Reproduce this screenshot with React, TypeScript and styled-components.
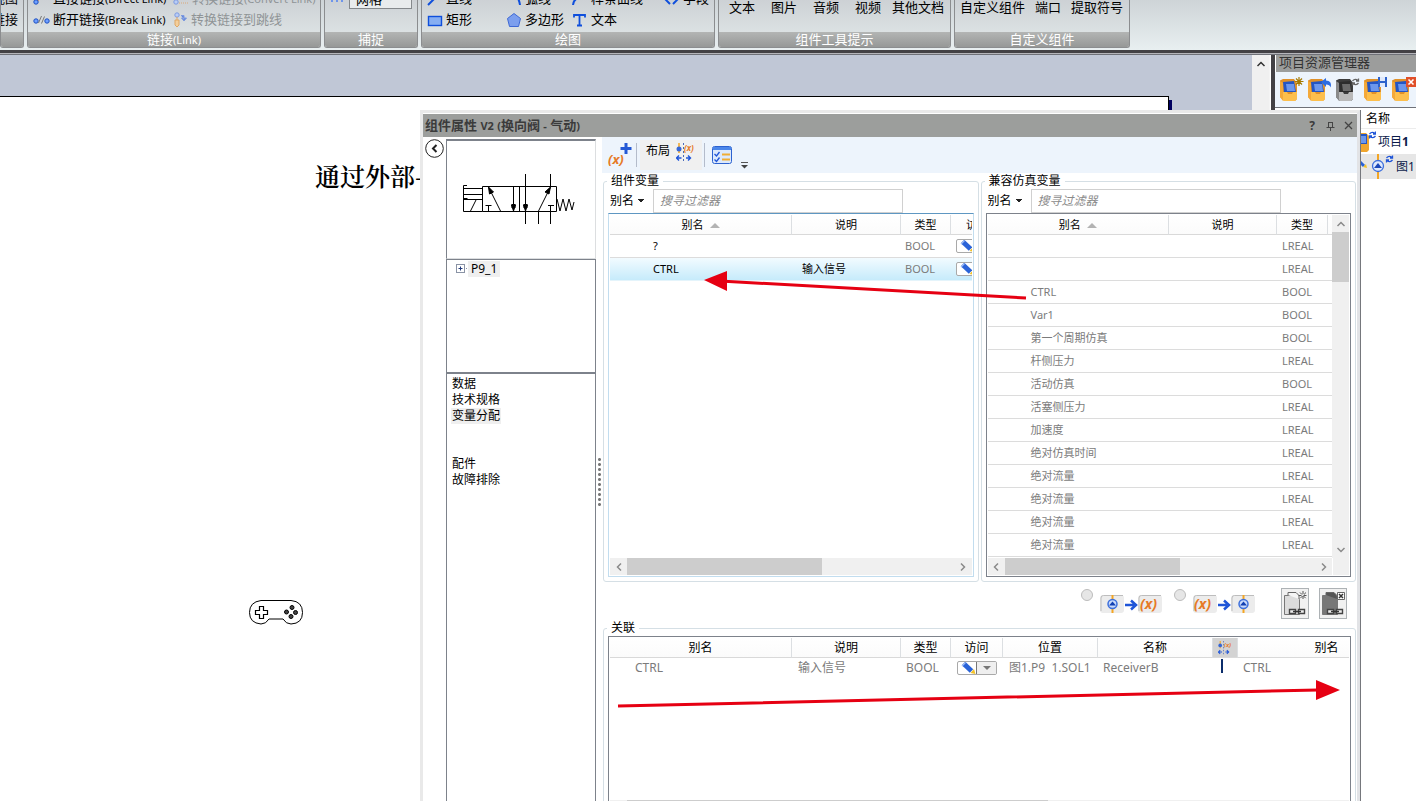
import React from "react";
import styled, { createGlobalStyle, css } from "styled-components";

const Global = createGlobalStyle`
  *, *::before, *::after { box-sizing: border-box; }
  html, body, #root { height: 100%; }
  body {
    margin: 0;
    overflow: hidden;
    background: #fff;
    color: #000;
    font: 12px/16px "Noto Sans", "Noto Sans CJK SC", sans-serif;
  }
  button, input, select {
    margin: 0; padding: 0; border: 0; background: none; color: inherit;
    font: inherit; border-radius: 0;
  }
  svg { display: block; flex: none; }
`;

const Page = styled.div`
  position: relative;
  display: flex;
  flex-direction: column;
  height: 100vh;
  overflow: hidden;
`;

/* ---------- ribbon ---------- */

const Ribbon = styled.header`
  flex: none;
  display: flex;
  gap: 3px;
  height: 50px;
  padding-bottom: 2px;
  background: linear-gradient(#ced4d7, #e8eff0);
  overflow: hidden;
`;

const Group = styled.section<{ $w: number }>`
  flex: none;
  width: ${(p) => p.$w}px;
  display: flex;
  flex-direction: column;
  border: solid #8b8d8f;
  border-width: 0 1px 1px 1px;
  border-radius: 0 0 3px 3px;
  background: linear-gradient(#cdd1d5, #e2e9e9);
  overflow: hidden;
`;

const GroupBody = styled.div<{ $raise?: number; $end?: boolean }>`
  flex: none;
  height: 32px;
  display: flex;
  flex-direction: column;
  justify-content: flex-end;
  align-items: ${(p) => (p.$end ? "flex-end" : "stretch")};
  padding: 0 5px ${(p) => p.$raise ?? 2}px;
`;

const GroupCaption = styled.h2`
  flex: 1;
  margin: 0;
  background: linear-gradient(#b3b5b4, #969897);
  color: #fff;
  font-size: 13px;
  font-weight: 400;
  line-height: 15px;
  text-align: center;
  white-space: nowrap;
`;

const Small = styled.span`
  font-size: 11px;
`;

const ToolRow = styled.div<{ $cols?: string; $gap?: number }>`
  flex: none;
  height: 21px;
  display: ${(p) => (p.$cols ? "grid" : "flex")};
  grid-template-columns: ${(p) => p.$cols};
  gap: ${(p) => p.$gap ?? 0}px;
  align-items: center;
`;

const Tool = styled.button<{ $off?: boolean }>`
  display: flex;
  align-items: center;
  gap: 3px;
  color: ${(p) => (p.$off ? "#8f9496" : "#000")};
  font-size: 13px;
  line-height: 21px;
  white-space: nowrap;
`;

const WideTool = styled(Tool)`
  min-width: 36px;
  justify-content: center;
`;

const GridSelect = styled.select`
  appearance: none;
  width: 65px;
  height: 20px;
  margin-bottom: 2px;
  padding: 0 6px;
  border: 1px solid #85898c;
  background: #e9eced;
  font-size: 13px;
`;

/* ---------- work area ---------- */

const Divider = styled.div`
  flex: none;
  height: 5px;
  border-top: 3px solid #434145;
  border-bottom: 1px solid #6f7178;
  background: #b5b5ba;
`;

const Work = styled.div`
  flex: 1;
  min-height: 0;
  display: flex;
`;

const Canvas = styled.main`
  flex: 1;
  min-width: 0;
  padding: 41px 83px 0 0;
  background: #c0c7d6;
`;

const Sheet = styled.div`
  height: 100%;
  padding: 61px 0 0 315px;
  border: solid #000;
  border-width: 1px 1px 0 0;
  background: #fff;
  box-shadow: 3px 4px 0 #00005f;
`;

const SheetTitle = styled.h1`
  margin: 0;
  font: 600 25px/34px "Noto Serif CJK SC", "Liberation Serif", "Noto Sans CJK SC", serif;
  white-space: nowrap;
`;

const Gamepad = styled.div`
  width: 54px;
  margin: 408px 0 0 -66px;
`;

const PageScroll = styled.div`
  flex: none;
  width: 17px;
  display: flex;
  flex-direction: column;
  align-items: center;
  padding-top: 4px;
  background: #f0f0f0;
`;

const Side = styled.aside`
  flex: none;
  width: 147px;
  display: flex;
  flex-direction: column;
  border-left: 1px solid #f4f4f4;
`;

const SideInner = styled.div`
  flex: 1;
  margin-left: 1px;
  border-left: 4px solid #434145;
  background: #fff;
`;

const SideTitle = styled.h2`
  height: 17px;
  margin: 0 0 0 1px;
  padding-left: 3px;
  background: #9c9d9c;
  color: #333;
  font-size: 13px;
  font-weight: 400;
  line-height: 14px;
  white-space: nowrap;
  overflow: hidden;
`;

const SideTools = styled.div`
  display: flex;
  gap: 4px;
  height: 36px;
  padding: 5px 0 0 5px;
  border-bottom: 1px solid #6f7178;
  background: #edf4fc;
  overflow: hidden;
`;

const SideHead = styled.div`
  height: 21px;
  padding-left: 91px;
  border-bottom: 1px solid #ececec;
  line-height: 21px;
`;

const SideItem = styled.div<{ $on?: boolean; $indent: number }>`
  display: flex;
  align-items: center;
  gap: 2px;
  height: 25px;
  padding-left: ${(p) => p.$indent}px;
  background: ${(p) => (p.$on ? "#e6e6e6" : "#fff")};
  color: #0a1a4a;
  white-space: nowrap;
  overflow: hidden;
`;

/* ---------- floating properties window ---------- */

const Win = styled.section`
  position: absolute;
  top: 110px;
  left: 420px;
  right: 56px;
  bottom: 0;
  display: flex;
  flex-direction: column;
  padding: 1px 0 0;
  border: solid #e9e9e9;
  border-width: 3px 3px 0 3px;
  border-right-color: #e2e3e6;
  background: #fff;
  box-shadow: 1px 0 0 #75777c;
  overflow: hidden;
`;

const TitleBar = styled.header`
  flex: none;
  display: flex;
  align-items: center;
  height: 23px;
  padding: 0 2px;
  background: #9c9e9c;
  color: #3b3b3b;
`;

const WinTitle = styled.h2`
  flex: 1;
  margin: 0;
  font-size: 13px;
  font-weight: 700;
  white-space: nowrap;
`;

const TitleBtn = styled.button`
  width: 14px;
  margin-left: 4px;
  display: flex;
  justify-content: center;
  font-weight: 700;
`;

const WinBody = styled.div`
  flex: 1;
  min-height: 0;
  display: flex;
`;

const BackRail = styled.div`
  flex: none;
  width: 23px;
  padding: 2px 0 0 2px;
`;

const LeftPane = styled.nav`
  flex: none;
  width: 150px;
  display: flex;
  flex-direction: column;
  padding-top: 2px;
`;

const Preview = styled.div`
  flex: none;
  height: 120px;
  padding: 32px 0 0 15px;
  border: 1px solid #dcdee0;
  border-top: 2px solid #7d828b;
  border-left: 1px solid #7d828b;
`;

const Tree = styled.div`
  flex: none;
  display: flex;
  align-items: flex-start;
  height: 114px;
  padding: 1px 0 0 9px;
  border: solid #7d828b;
  border-width: 1px;
`;

const TreeLabel = styled.span`
  padding: 0 3px;
  background: #efefef;
`;

const Sections = styled.ul`
  flex: 1;
  margin: 0;
  padding: 2px 4px;
  border: solid #7d828b;
  border-width: 1px 1px 0;
  list-style: none;
`;

const SectionItem = styled.li<{ $on?: boolean; $gap?: boolean }>`
  width: fit-content;
  height: 16px;
  margin-top: ${(p) => (p.$gap ? 32 : 0)}px;
  padding: 0 1px;
  background: ${(p) => (p.$on ? "#efefef" : "none")};
`;

const Splitter = styled.div`
  flex: none;
  width: 6px;
  padding: 320px 0 0 2px;
`;

const Dots = styled.div`
  width: 3px;
  height: 50px;
  background: radial-gradient(circle, #777 0 1px, transparent 2px) 0 0 / 3px 5px;
`;

const RightPane = styled.div`
  flex: 1;
  min-width: 0;
  display: flex;
  flex-direction: column;
`;

const ToolBar = styled.div`
  flex: none;
  display: flex;
  align-items: center;
  height: 36px;
  padding-left: 6px;
  background: #edf4fc;
`;

const Sep = styled.span<{ $m: number }>`
  width: 1px;
  height: 24px;
  margin: 0 ${(p) => p.$m}px;
  background: #b4bccb;
`;

const LayoutBtn = styled.button`
  display: flex;
  gap: 6px;
  width: 62px;
  height: 30px;
  padding: 3px 6px;
  background: #f0f0f0;
`;

const IconBtn = styled.button<{ $gap?: number; $low?: boolean }>`
  display: flex;
  margin-left: ${(p) => p.$gap ?? 0}px;
  align-self: ${(p) => (p.$low ? "flex-end" : "center")};
  padding-bottom: ${(p) => (p.$low ? 4 : 0)}px;
`;

const Pair = styled.div`
  flex: none;
  display: flex;
  gap: 2px;
  padding: 0 1px;
`;

const Box = styled.fieldset<{ $fill?: boolean }>`
  flex: 1;
  min-width: 0;
  margin: 0 ${(p) => (p.$fill ? 1 : 0)}px;
  padding: 0 4px 4px;
  border: 1px solid #d5dfe5;
  border-radius: 3px;
`;

const Legend = styled.legend`
  height: 16px;
  margin-left: -1px;
  padding: 0 4px;
  line-height: 16px;
`;

const Filter = styled.div`
  display: flex;
  height: 24px;
`;

const FieldSelect = styled.select`
  flex: none;
  appearance: none;
  width: 45px;
  padding-left: 2px;
  background: linear-gradient(to bottom right, #222 50%, transparent 51%) 33px 10px / 3px 3px no-repeat,
    linear-gradient(to bottom left, #222 50%, transparent 51%) 30px 10px / 3px 3px no-repeat;
`;

const Search = styled.input`
  flex: 0 1 250px;
  min-width: 0;
  padding: 0 6px;
  border: 1px solid #d0d0d0;
  background: #fff;
  &::placeholder { color: #8a8a8a; opacity: 1; font-style: italic; }
`;

const List = styled.div<{ $focus?: boolean }>`
  display: flex;
  flex-direction: column;
  padding: 1px;
  border: 1px solid ${(p) => (p.$focus ? "#c2ddef" : "#7d828b")};
  border-top-color: ${(p) => (p.$focus ? "#5e97c2" : "#7d828b")};
`;

const ListMain = styled.div<{ $h: number }>`
  display: flex;
  height: ${(p) => p.$h}px;
  overflow: hidden;
`;

const ListView = styled.div`
  flex: 1;
  min-width: 0;
  overflow: hidden;
`;

const Table = styled.table<{ $w: number; $big?: boolean }>`
  width: ${(p) => p.$w}px;
  min-width: 100%;
  table-layout: fixed;
  border-collapse: separate;
  border-spacing: 0;
  font-size: ${(p) => (p.$big ? 12 : 11)}px;
  line-height: 16px;
  white-space: nowrap;
`;

const Th = styled.th<{ $dark?: boolean }>`
  height: 20px;
  padding: 0;
  border-right: 1px solid #dcdfe2;
  border-bottom: 1px solid #d9d9d9;
  background: ${(p) => (p.$dark ? "#d3d3d3" : "linear-gradient(#fff, #fbfbfb)")};
  font-weight: 400;
  text-align: center;
  overflow: hidden;
  &:last-child { border-right: 0; }
  svg { display: inline-block; vertical-align: middle; }
`;

const Td = styled.td<{ $pad: number; $dark?: boolean; $plain?: boolean }>`
  height: ${(p) => (p.$plain ? 20 : 23)}px;
  padding: 0 0 0 ${(p) => p.$pad}px;
  border-bottom: ${(p) => (p.$plain ? "0" : "1px solid #dcdcdc")};
  color: ${(p) => (p.$dark ? "#000" : "#7b7b7b")};
  overflow: hidden;
`;

const Tr = styled.tr<{ $on?: boolean }>`
  ${(p) =>
    p.$on &&
    css`
      td { background: linear-gradient(#f2fbff, #c6ebfb); border-bottom-color: #e4f4fb; }
    `}
`;

const ScrollH = styled.div`
  display: flex;
  align-items: center;
  flex: 1;
  height: 17px;
  background: #f0f0f0;
`;

const ScrollRow = styled.div`
  display: flex;
  gap: 1px;
`;

const Corner = styled.div`
  width: 16px;
  background: #f0f0f0;
`;

const ScrollV = styled.div`
  flex: none;
  width: 17px;
  display: flex;
  flex-direction: column;
  background: #f0f0f0;
`;

const ScrollBtn = styled.button`
  flex: none;
  width: 17px;
  height: 17px;
  display: grid;
  place-items: center;
`;

const ThumbH = styled.div<{ $pct: number }>`
  flex: 0 0 ${(p) => p.$pct}%;
  height: 17px;
  background: #cdcdcd;
`;

const ThumbV = styled.div`
  height: 50px;
  background: #cdcdcd;
`;

const Grow = styled.span`
  flex: 1;
`;

const Split = styled.span<{ $w: number }>`
  display: flex;
  width: ${(p) => p.$w}px;
  height: 14px;
  border: 1px solid #a9a9a9;
  border-radius: 2px;
  background: #fff;
  overflow: hidden;
`;

const PencilBtn = styled.button`
  width: 18px;
  padding-left: 3px;
`;

const DropBtn = styled.button`
  flex: 1;
  display: grid;
  place-items: center;
  border-left: 1px solid #777;
  background: #efefef;
`;

const LinkBar = styled.div`
  flex: none;
  display: flex;
  justify-content: flex-end;
  height: 38px;
  padding: 6px 10px 0 0;
`;

const Mode = styled.label`
  display: flex;
  gap: 7px;
  margin-right: 12px;
  svg { margin-top: 6px; }
  & + & { margin-right: 26px; }
`;

const Radio = styled.input`
  appearance: none;
  width: 12px;
  height: 12px;
  margin-top: 1px;
  border: 1px solid #bcbcbc;
  border-radius: 50%;
  background: #e6e6e6;
`;

const LinkBtn = styled.button`
  width: 28px;
  height: 31px;
  margin-left: 10px;
  display: grid;
  place-items: center;
  border: 1px solid #adb2b5;
  background: #f1f1f1;
  ${Mode} + & { margin-left: 0; }
`;

const Marker = styled.span`
  display: block;
  width: 2px;
  height: 14px;
  margin-bottom: 4px;
  background: #0b2d6b;
`;

const Arrows = styled.svg`
  position: absolute;
  inset: 0;
  width: 100%;
  height: 100%;
  pointer-events: none;
`;

/* ---------- icons ---------- */

const BLUE = "#1f55d8";
const ORANGE = "#e67a28";

const Chevron = ({ dir, c = "#8a8a8a" }: { dir: "l" | "r" | "u" | "d"; c?: string }) => {
  const d = { l: "M7 1.500 3.500 5 7 8.500", r: "M3 1.500 6.500 5 3 8.500", u: "M1.500 7 5 3.500 8.500 7", d: "M1.500 3 5 6.500 8.500 3" }[dir];
  return (
    <svg width="10" height="10">
      <path d={d} fill="none" stroke={c} strokeWidth="1.500" />
    </svg>
  );
};

const Break = () => (
  <svg width="17" height="12" fill="#6fa0ff" stroke="#1c4fc0">
    <circle cx="3" cy="7" r="2.200" /><circle cx="14" cy="7" r="2.200" />
    <path d="M5.500 9 8.500 2M8.500 9.500 11.500 2.500" stroke="#777" />
  </svg>
);
const Direct = () => (
  <svg width="17" height="14" fill="#6fa0ff" stroke="#1c4fc0">
    <path d="M4 9 12 1" stroke={ORANGE} strokeWidth="1.500" />
    <circle cx="3" cy="10" r="2.200" />
  </svg>
);
const Convert = () => (
  <svg width="17" height="14" fill="#b9cdf5" stroke="#7d9ae0">
    <path d="M7 11h9" stroke="#d9a878" strokeDasharray="1 1" />
    <circle cx="4" cy="10" r="2.200" /><path d="M5 8 9 4" stroke="#e7b27e" />
  </svg>
);
const Jumper = () => (
  <svg width="16" height="16" fill="#b9cdf5" stroke="#7d9ae0">
    <circle cx="5" cy="3" r="2.200" />
    <path d="M5 5v3M3 8h4v5l-2 2-2-2z" fill="#f3cf9c" stroke="#dfa765" />
    <path d="M9 3.500h3v4M9.500 6l2.500 3 2.500-3z" fill="#5f84da" />
  </svg>
);
const Shape = ({ kind }: { kind: "line" | "rect" | "arc" | "poly" | "spline" | "text" | "field" }) => (
  <svg width="16" height="16" fill="none" stroke="#0f4fdc" strokeWidth="2">
    {kind === "line" && <path d="M1 14 13 2" />}
    {kind === "rect" && <rect x="1.500" y="4.500" width="13" height="9" fill="#86aef2" strokeWidth="1.400" />}
    {kind === "arc" && <path d="M7 2q6 4 7 12" />}
    {kind === "poly" && <path d="M8 1.500 14.500 6.500 12.500 14.500h-9L1.500 6.500z" fill="#7c9fee" stroke="#3e68d4" strokeWidth="1" />}
    {kind === "spline" && <path d="M1 14Q2 5 12 8" />}
    {kind === "text" && <path d="M2 5.500V3h11v2.500M7.500 3v10.500M5 13.500h5" strokeWidth="1.800" />}
    {kind === "field" && <path d="M6 4 2 9l4 4M9 4l4 5-4 4" />}
  </svg>
);

const Sync = ({ x, y, c }: { x: number; y: number; c: string }) => (
  <g transform={`translate(${x} ${y})`} fill="none" stroke={c} strokeWidth="1.300">
    <path d="M.500 3Q3 0 6 2.500M6.500.500v2.500H4M6.500 5Q4 8 1 5.500M.500 7.500V5H3" />
  </g>
);

const Book = ({ mark, grey }: { mark?: "new" | "undo" | "sync" | "save" | "del"; grey?: boolean }) => (
  <svg width="24" height="25">
    <path d="M0 3.500 3 2h11l3 4v16l-2 2H4L0 20z" fill={grey ? "#3c3c3c" : "#e0912a"} />
    <path d="M3 5 14 4l2 11H4z" fill={grey ? "#2c2c2c" : "#2456c4"} />
    <path d="M6 7h8l1 7H7z" fill={grey ? "#6a6a6a" : "#6c97ec"} />
    <path d="M3 15h4l1 2h4l1-2h4v7l-2 2H4l-1-1z" fill={grey ? "#b9b9b9" : "#fdbf4c"} />
    <path d="M0 4 3 6v18L0 20z" fill={grey ? "#8a8a8a" : "#f4a93a"} />
    {mark === "new" && (
      <path d="M19 0v9M14.500 4.500h9M16 1.500l6 6M22 1.500l-6 6" stroke="#a67a00" strokeWidth="1.200" />
    )}
    {mark === "undo" && <path d="M13 5l5-4v2.500q6 0 5 7-1.500-3-5-3V10z" fill="#2c6be0" />}
    {mark === "sync" && <Sync x={16} y={1} c="#666" />}
    {mark === "save" && (
      <g><path d="M14 0h9v10h-9z" fill="#2c62cc" /><path d="M16 0h5v4h-5zM16 6h5v4h-5z" fill="#dfe9fb" /></g>
    )}
    {mark === "del" && (
      <g><path d="M14 0h10v10H14z" fill="#e0502a" /><path d="M16.500 2.500l5 5m0-5l-5 5" stroke="#fff" strokeWidth="1.600" /></g>
    )}
  </svg>
);

const Pencil = () => (
  <svg width="15" height="12">
    <path d="M2.500 1.500 10.500 9" stroke="#2a63d8" strokeWidth="5" />
    <path d="M4.500 0.500 1 4" stroke="#9dbcf6" strokeWidth="1.200" />
    <path d="M9.500 11l3.500-4 1.500 5z" fill="#f3c228" />
  </svg>
);

const Node = ({ x, y = 0 }: { x: number; y?: number }) => (
  <g transform={`translate(${x} ${y})`}>
    <path d="M.500-9V9" stroke="#f5a623" strokeWidth="2" />
    <circle cx=".500" r="4.500" fill="#c9dafa" stroke="#3d6fdc" strokeWidth="1.500" />
    <path d="M-3 1.500.500-2.500 4 1.500z" fill="#1240b4" />
  </g>
);

const VarX = ({ x, y, size }: { x: number; y: number; size: number }) => (
  <text x={x} y={y} fontFamily="'Noto Sans', sans-serif" fontStyle="italic" fontWeight="700" fontSize={size} fill={ORANGE}>
    (x)
  </text>
);

const AddVar = () => (
  <svg width="25" height="26">
    <path d="M18 1v11M12.500 6.500h11" stroke="#2459d6" strokeWidth="3" />
    <VarX x={0} y={22} size={13} />
  </svg>
);

const LinkVars = ({ w = 19 }: { w?: number }) => (
  <svg width={w} height={w} viewBox="0 0 19 19">
    <path d="M3 0v10" stroke="#f5a623" strokeWidth="1.500" />
    <circle cx="3" cy="6" r="2.500" fill="#3667d6" />
    <path d="M7.500 0v18" stroke="#4a69b8" strokeDasharray="2 2" />
    <text x="8" y="8" fontSize="8" fontStyle="italic" fontWeight="700" fill={ORANGE}>(x)</text>
    <path d="M5.500 15H1M3 12.500.500 15 3 17.500M10 15h4M12 12.500l2.500 2.500L12 17.500" stroke={BLUE} fill="none" strokeWidth="1.400" />
  </svg>
);

const Checks = () => (
  <svg width="20" height="18">
    <rect x=".500" y=".500" width="19" height="17" rx="2" fill="#dce9fc" stroke="#2c62d0" />
    <path d="M1 1h18v3H1z" fill="#4a86ea" />
    <path d="M2.500 8l2 2 3-4M2.500 13.500l2 2 3-4" fill="none" stroke={BLUE} strokeWidth="1.300" />
    <path d="M10 8.500h8M10 13.500h8" stroke="#f0ad35" strokeWidth="2" />
  </svg>
);

const Flow = ({ reverse }: { reverse?: boolean }) => (
  <svg width="62" height="20">
    <rect x="0" y="1" width="24" height="18" rx="3" fill="#ececec" />
    <rect x="38" y="1" width="24" height="18" rx="3" fill="#ececec" />
    <path d="M1 17V4q0-2.500 2.500-2.500H23M39 17V4q0-2.500 2.500-2.500H61" fill="none" stroke="#bdbdbd" />
    <Node x={reverse ? 50 : 12} y={10} />
    <VarX x={reverse ? 1 : 40} y={15} size={14} />
    <path d="M25 11h9M31 6.500l5 4.500-5 4.500" fill="none" stroke="#1f55d8" strokeWidth="2.500" />
  </svg>
);

const DocLink = ({ dark }: { dark?: boolean }) => (
  <svg width="24" height="27" fill="none">
    <path d="M1.500 5.500h12l3 4v15h-15z" fill={dark ? "#777" : "#dcdcdc"} stroke="#777" />
    <path d="M5 5V2.500h8l3 3V9" fill={dark ? "#555" : "#f5f5f5"} stroke="#666" />
    {dark ? (
      <g><path d="M16.500 2.500h7v7h-7z" fill="#fff" stroke="#666" /><path d="M18 4l4 4m0-4l-4 4" stroke="#333" strokeWidth="1.500" /></g>
    ) : (
      <path d="M20 1v9M15.500 5.500h8M17 2.500l6 6m0-6l-6 6" stroke="#555" strokeDasharray="3 2" />
    )}
    <path d="M6.500 19.500h6v4h-6zM15.500 19.500h6v4h-6z" fill="#eee" stroke="#444" strokeWidth="1.400" />
    <path d="M10 21.500h8" stroke="#333" strokeWidth="1.500" />
  </svg>
);

const Valve = () => (
  <svg width="114" height="54" fill="none" stroke="#000">
    <path d="M20.500 13.500h74v25h-74zM57.500 13.500v25M51.500 13.500v25M63.500 1v50M88.500 1v12M88.500 51V32.500M86 32.500h6M76.500 38v13M26.500 38v-5.500M23.500 32.500h6" />
    <path d="M5 12.500H1.500v26h19M1.500 15.500h19M1.500 21.500h19M1.500 26.500h19M1.500 25.500h4M8.500 38 14 27M27 15 38.500 38M88 15 76.500 38" />
    <path d="M26.500 14l1 7 4-2zM88.500 14l-5.500 5 4 2zM51.500 38l-2-6h4zM63.500 38l-2-6h4z" fill="#000" />
    <path d="M49.500 31h4v4h-4zM61.500 31h4v4h-4z" fill="#000" stroke="none" />
    <path d="M95 26l3 12 3-12 3 12 3-12 3 11 2-8" />
  </svg>
);

/* ---------- data ---------- */

const VARS = [
  ["", "LREAL"], ["", "LREAL"], ["CTRL", "BOOL"], ["Var1", "BOOL"], ["第一个周期仿真", "BOOL"],
  ["杆侧压力", "LREAL"], ["活动仿真", "BOOL"], ["活塞侧压力", "LREAL"], ["加速度", "LREAL"],
  ["绝对仿真时间", "LREAL"], ["绝对流量", "LREAL"], ["绝对流量", "LREAL"], ["绝对流量", "LREAL"], ["绝对流量", "LREAL"],
];

const Cols = ({ w }: { w: (number | null)[] }) => (
  <colgroup>{w.map((n, i) => <col key={i} width={n ?? undefined} />)}</colgroup>
);

const SortMark = () => (
  <svg width="16" height="5"><path d="M6 5l5-5 5 5z" fill="#b3b3b3" /></svg>
);

const FilterBar = ({ label }: { label: string }) => (
  <Filter>
    <FieldSelect aria-label={`${label} 字段`}><option>别名</option></FieldSelect>
    <Search aria-label={`${label} 过滤器`} placeholder="搜寻过滤器" />
  </Filter>
);

const HBar = ({ pct, corner }: { pct: number; corner?: boolean }) => (
  <ScrollRow>
    <ScrollH>
      <ScrollBtn aria-label="向左"><Chevron dir="l" /></ScrollBtn>
      <ThumbH $pct={pct} />
      <Grow />
      <ScrollBtn aria-label="向右"><Chevron dir="r" /></ScrollBtn>
    </ScrollH>
    {corner && <Corner />}
  </ScrollRow>
);

const Access = ({ w }: { w: number }) => (
  <Split $w={w}>
    <PencilBtn aria-label="编辑"><Pencil /></PencilBtn>
    <DropBtn aria-label="访问选项"><svg width="8" height="4"><path d="M0 0h8L4 4z" fill="#777" /></svg></DropBtn>
  </Split>
);

export default function App() {
  return (
    <Page>
      <Global />
      <Ribbon>
        <Group $w={24}>
          <GroupBody $end>
            <ToolRow><Tool>视图</Tool></ToolRow>
            <ToolRow><Tool>链接</Tool></ToolRow>
          </GroupBody>
          <GroupCaption />
        </Group>
        <Group $w={294}>
          <GroupBody>
            <ToolRow $cols="139px 1fr">
              <Tool><Direct /><span>直接链接<Small>(Direct Link)</Small></span></Tool>
              <Tool $off><Convert /><span>转换链接<Small>(Convert Link)</Small></span></Tool>
            </ToolRow>
            <ToolRow $cols="139px 1fr">
              <Tool><Break /><span>断开链接<Small>(Break Link)</Small></span></Tool>
              <Tool $off><Jumper />转换链接到跳线</Tool>
            </ToolRow>
          </GroupBody>
          <GroupCaption>链接<Small>(Link)</Small></GroupCaption>
        </Group>
        <Group $w={94}>
          <GroupBody $raise={22}>
            <ToolRow $gap={5}>
              <svg width="14" height="8" fill="#6f95ea"><path d="M1 4h2v2H1zM6 4h2v2H6zM11 4h2v2h-2z" /></svg>
              <GridSelect aria-label="捕捉模式"><option>网格</option></GridSelect>
            </ToolRow>
          </GroupBody>
          <GroupCaption>捕捉</GroupCaption>
        </Group>
        <Group $w={294}>
          <GroupBody>
            <ToolRow $cols="79px 66px 92px 1fr">
              <Tool><Shape kind="line" />直线</Tool>
              <Tool><Shape kind="arc" />弧线</Tool>
              <Tool><Shape kind="spline" />样条曲线</Tool>
              <Tool><Shape kind="field" />字段</Tool>
            </ToolRow>
            <ToolRow $cols="79px 66px 92px 1fr">
              <Tool><Shape kind="rect" />矩形</Tool>
              <Tool><Shape kind="poly" />多边形</Tool>
              <Tool><Shape kind="text" />文本</Tool>
            </ToolRow>
          </GroupBody>
          <GroupCaption>绘图</GroupCaption>
        </Group>
        <Group $w={233}>
          <GroupBody $raise={14}>
            <ToolRow $gap={6}>
              <WideTool>文本</WideTool><WideTool>图片</WideTool><WideTool>音频</WideTool>
              <WideTool>视频</WideTool><WideTool>其他文档</WideTool>
            </ToolRow>
          </GroupBody>
          <GroupCaption>组件工具提示</GroupCaption>
        </Group>
        <Group $w={176}>
          <GroupBody $raise={14}>
            <ToolRow $gap={10}>
              <Tool>自定义组件</Tool><Tool>端口</Tool><Tool>提取符号</Tool>
            </ToolRow>
          </GroupBody>
          <GroupCaption>自定义组件</GroupCaption>
        </Group>
      </Ribbon>
      <Divider />

      <Work>
        <Canvas>
          <Sheet>
            <SheetTitle>通过外部-</SheetTitle>
            <Gamepad>
              <svg width="54" height="25" fill="#fff" stroke="#000">
                <path d="M12 .500h30q11.500 1 11.500 12T42 24q-5 0-8-5H20q-3 5-8 5Q.500 23 .500 12.500T12 .500z" />
                <path d="M10.500 6.500h4v4h4v4h-4v4h-4v-4h-4v-4h4z" strokeWidth="1.200" />
                <g fill="#444"><circle cx="43" cy="7.500" r="2" /><circle cx="42" cy="16.500" r="2" /><circle cx="37.500" cy="12" r="2" /><circle cx="46.500" cy="12.500" r="2" /></g>
              </svg>
            </Gamepad>
          </Sheet>
        </Canvas>
        <PageScroll><Chevron dir="u" c="#333" /></PageScroll>
        <Side>
          <SideInner>
            <SideTitle>项目资源管理器</SideTitle>
            <SideTools>
              <Book mark="new" /><Book mark="undo" /><Book mark="sync" grey /><Book mark="save" /><Book mark="del" />
            </SideTools>
            <SideHead>名称</SideHead>
            <SideItem $indent={78}>
              <svg width="23" height="23">
                <path d="M6 3h7l3 3v14l-2 2H4z" fill="#f0a52c" /><path d="M6 4h8v10H6z" fill="#2456c4" />
                <path d="M8 6h5v7H8z" fill="#6c97ec" />
                <Sync x={16} y={1} c={BLUE} />
              </svg>
              <span>项目<b>1</b></span>
            </SideItem>
            <SideItem $on $indent={82}>
              <svg width="37" height="25">
                <path d="M0 5l7 7" stroke="#2a63d8" strokeWidth="3" /><path d="M6 13l4 1-1-4z" fill="#f3c228" />
                <g transform="translate(21 12)">
                  <path d="M0-12V13" stroke="#f5a623" strokeWidth="2" />
                  <circle r="5.500" fill="#dfe9fc" stroke="#3d6fdc" strokeWidth="1.300" />
                  <path d="M-4 2 0-3 4 2z" fill="#1b47b8" />
                </g>
                <Sync x={29} y={1} c={BLUE} />
              </svg>
              图1
            </SideItem>
          </SideInner>
        </Side>
      </Work>

      <Win>
        <TitleBar>
          <WinTitle>组件属性 <Small>V2</Small> <Small>(</Small>换向阀 <Small>-</Small> 气动<Small>)</Small></WinTitle>
          <TitleBtn aria-label="帮助">?</TitleBtn>
          <TitleBtn aria-label="固定">
            <svg width="9" height="10" fill="none" stroke="#444"><path d="M2.500 1v5M6.500 1v5M2.500 1.500h4M.500 6.500h8M4.500 6.500V10" /></svg>
          </TitleBtn>
          <TitleBtn aria-label="关闭">
            <svg width="9" height="9" fill="none" stroke="#444" strokeWidth="1.300"><path d="M1 1l7 7m0-7L1 8" /></svg>
          </TitleBtn>
        </TitleBar>
        <WinBody>
          <BackRail>
            <IconBtn aria-label="返回">
              <svg width="19" height="19" fill="none" stroke="#222"><circle cx="9.500" cy="9.500" r="8.800" /><path d="M11.500 6 8 9.500l3.500 3.500" strokeWidth="2" /></svg>
            </IconBtn>
          </BackRail>
          <LeftPane>
            <Preview><Valve /></Preview>
            <Tree>
              <svg width="12" height="14" fill="none" stroke="#8a93a5">
                <rect x=".500" y="3.500" width="8" height="8" /><path d="M2.500 7.500h4M4.500 5.500v4" stroke="#223a7a" /><path d="M10 7.500h3" strokeDasharray="1 1" />
              </svg>
              <TreeLabel>P9_1</TreeLabel>
            </Tree>
            <Sections>
              <SectionItem>数据</SectionItem>
              <SectionItem>技术规格</SectionItem>
              <SectionItem $on>变量分配</SectionItem>
              <SectionItem $gap>配件</SectionItem>
              <SectionItem>故障排除</SectionItem>
            </Sections>
          </LeftPane>
          <Splitter><Dots /></Splitter>
          <RightPane>
            <ToolBar>
              <IconBtn aria-label="添加变量"><AddVar /></IconBtn>
              <Sep $m={3} />
              <LayoutBtn>布局 <LinkVars /></LayoutBtn>
              <Sep $m={2} />
              <IconBtn $gap={5} aria-label="选项"><Checks /></IconBtn>
              <IconBtn $gap={9} $low aria-label="更多">
                <svg width="7" height="7"><path d="M0 .500h7" stroke="#555" /><path d="M0 3h7L3.500 6.500z" fill="#444" /></svg>
              </IconBtn>
            </ToolBar>
            <Pair>
              <Box>
                <Legend>组件变量</Legend>
                <FilterBar label="组件变量" />
                <List $focus>
                  <ListMain $h={343}>
                    <ListView>
                      <Table $w={393}>
                        <Cols w={[null, 109, 50, 52]} />
                        <thead>
                          <tr><Th>别名<SortMark /></Th><Th>说明</Th><Th>类型</Th><Th>访问</Th></tr>
                        </thead>
                        <tbody>
                          <Tr>
                            <Td $pad={43} $dark>?</Td><Td $pad={10} /><Td $pad={4}>BOOL</Td><Td $pad={5}><Access w={40} /></Td>
                          </Tr>
                          <Tr $on>
                            <Td $pad={43} $dark>CTRL</Td><Td $pad={10} $dark>输入信号</Td><Td $pad={4}>BOOL</Td><Td $pad={5}><Access w={40} /></Td>
                          </Tr>
                        </tbody>
                      </Table>
                    </ListView>
                  </ListMain>
                  <HBar pct={54} />
                </List>
              </Box>
              <Box>
                <Legend>兼容仿真变量</Legend>
                <FilterBar label="兼容仿真变量" />
                <List>
                  <ListMain $h={343}>
                    <ListView>
                      <Table $w={344}>
                        <Cols w={[null, 108, 51, 4]} />
                        <thead>
                          <tr><Th>别名<SortMark /></Th><Th>说明</Th><Th>类型</Th><Th /></tr>
                        </thead>
                        <tbody>
                          {VARS.map(([name, type], i) => (
                            <Tr key={i}>
                              <Td $pad={43}>{name}</Td><Td $pad={0} /><Td $pad={5}>{type}</Td><Td $pad={0} />
                            </Tr>
                          ))}
                        </tbody>
                      </Table>
                    </ListView>
                    <ScrollV>
                      <ScrollBtn aria-label="向上"><Chevron dir="u" /></ScrollBtn>
                      <ThumbV />
                      <Grow />
                      <ScrollBtn aria-label="向下"><Chevron dir="d" /></ScrollBtn>
                    </ScrollV>
                  </ListMain>
                  <HBar pct={51} corner />
                </List>
              </Box>
            </Pair>
            <LinkBar>
              <Mode><Radio type="radio" name="mode" aria-label="图到变量" /><Flow /></Mode>
              <Mode><Radio type="radio" name="mode" aria-label="变量到图" /><Flow reverse /></Mode>
              <LinkBtn aria-label="新建关联"><DocLink /></LinkBtn>
              <LinkBtn aria-label="删除关联"><DocLink dark /></LinkBtn>
            </LinkBar>
            <Box $fill>
              <Legend>关联</Legend>
              <List>
                <ListMain $h={162}>
                  <ListView>
                    <Table $w={805} $big>
                      <Cols w={[182, 109, 50, 52, 95, 115, 25, null]} />
                      <thead>
                        <tr>
                          <Th>别名</Th><Th>说明</Th><Th>类型</Th><Th>访问</Th>
                          <Th>位置</Th><Th>名称</Th><Th $dark><LinkVars w={14} /></Th><Th>别名</Th>
                        </tr>
                      </thead>
                      <tbody>
                        <tr>
                          <Td $plain $pad={25}>CTRL</Td><Td $plain $pad={6}>输入信号</Td><Td $plain $pad={5}>BOOL</Td>
                          <Td $plain $pad={6}><Access w={40} /></Td><Td $plain $pad={6}>图1.P9&nbsp; 1.SOL1</Td>
                          <Td $plain $pad={5}>ReceiverB</Td><Td $plain $pad={8}><Marker /></Td><Td $plain $pad={5}>CTRL</Td>
                        </tr>
                      </tbody>
                    </Table>
                  </ListView>
                </ListMain>
                <HBar pct={57} />
              </List>
            </Box>
          </RightPane>
        </WinBody>
      </Win>

      <Arrows fill="#e60012" stroke="#e60012" aria-hidden="true">
        <path d="M1026 298 720 281M618 706l700-16" strokeWidth="3" />
        <path d="M704 280l23-9v20zM1340 690l-24-10v20z" stroke="none" />
      </Arrows>
    </Page>
  );
}
